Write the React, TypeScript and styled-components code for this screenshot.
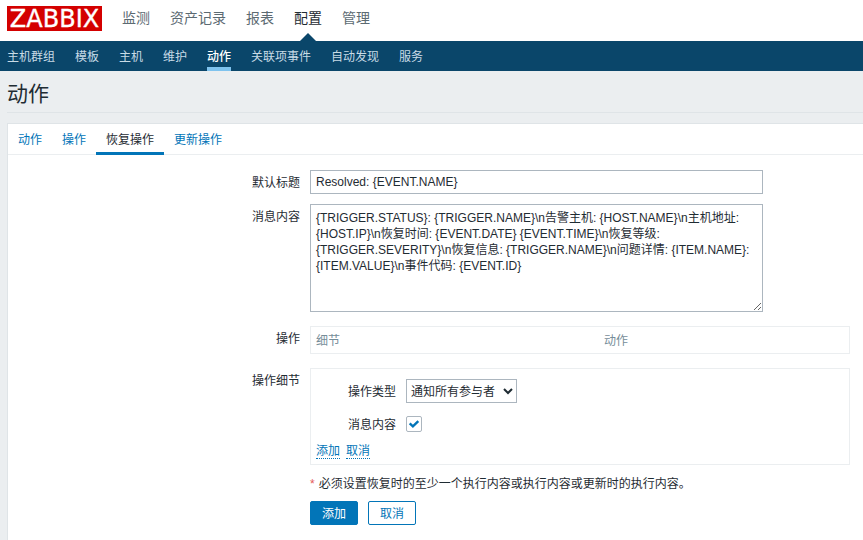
import React from 'react';
import styled, { createGlobalStyle, css } from 'styled-components';

const fontStack = '"Liberation Sans", "Noto Sans CJK SC", sans-serif';

const GlobalStyle = createGlobalStyle`
  *, *::before, *::after { box-sizing: border-box; }
  html, body { margin: 0; height: 540px; overflow: hidden; }
  body { background: #ebeef0; color: #1f2c33; font: 12px/16px ${fontStack}; }
`;

const Page = styled.div`
  height: 540px;
  display: flex;
  flex-direction: column;
  overflow: hidden;
`;

const TopBar = styled.header`
  flex: none;
  height: 41px;
  display: flex;
  align-items: stretch;
  padding-left: 7px;
  background: #fff;
`;

const Logo = styled.div`
  width: 95px;
  height: 25px;
  margin: 6px 20px 0 0;
  background: #d40000;
  color: #fff;
  font: 24px/26px "DejaVu Sans", sans-serif;
  -webkit-text-stroke: 0.35px #fff;
  text-align: center;
  white-space: nowrap;
`;

const TopLink = styled.a<{ $active?: boolean }>`
  position: relative;
  margin-right: 20px;
  padding-top: 8px;
  font-size: 14px;
  line-height: 20px;
  color: ${(p) => (p.$active ? '#1f2c33' : '#5c6a72')};
  ${(p) =>
    p.$active &&
    css`
      &::after {
        content: '';
        position: absolute;
        left: 50%;
        bottom: 0;
        margin-left: -8px;
        border: 8px solid transparent;
        border-top: 0;
        border-bottom-color: #0a466a;
      }
    `}
`;

const SubNav = styled.nav`
  flex: none;
  height: 30px;
  display: flex;
  gap: 20px;
  padding-left: 7px;
  background: #0a466a;
`;

const SubLink = styled.a<{ $active?: boolean }>`
  height: 30px;
  padding-top: 8px;
  color: ${(p) => (p.$active ? '#fff' : '#c8dbe6')};
  font-weight: ${(p) => (p.$active ? 500 : 400)};
  border-bottom: 4px solid ${(p) => (p.$active ? '#7fc3ee' : 'transparent')};
`;

const Title = styled.h1`
  flex: none;
  height: 42px;
  margin: 0 0 10px 7px;
  padding-top: 11px;
  border-bottom: 1px solid #dfe4e7;
  font-size: 21px;
  line-height: 24px;
  font-weight: 400;
`;

const Panel = styled.main`
  flex: 1;
  margin-left: 7px;
  background: #fff;
  border: 1px solid #dfe4e7;
  border-width: 1px 0 0 1px;
`;

const Tabs = styled.div`
  display: flex;
  height: 31px;
  border-bottom: 1px solid #ebeef0;
`;

const Tab = styled.a<{ $active?: boolean }>`
  height: 31px;
  padding: 8px 10px 0;
  color: ${(p) => (p.$active ? '#1f2c33' : '#0275b8')};
  border-bottom: 3px solid ${(p) => (p.$active ? '#0275b8' : 'transparent')};
`;

const Form = styled.form`
  padding-top: 15px;
`;

const Row = styled.div<{ $gap?: number }>`
  display: grid;
  grid-template-columns: 292px 1fr;
  column-gap: 10px;
  margin-bottom: ${(p) => p.$gap ?? 14}px;
`;

const Label = styled.label<{ $top?: number }>`
  padding-top: ${(p) => p.$top ?? 5}px;
  text-align: right;
`;

const TextInput = styled.input`
  width: 453px;
  height: 24px;
  padding: 0 5px;
  border: 1px solid #acb6bf;
  border-radius: 0;
  color: #1f2c33;
  font: 12px/16px ${fontStack};
`;

const MessageArea = styled.textarea`
  display: block;
  width: 453px;
  height: 108px;
  margin: 0;
  padding: 5px;
  border: 1px solid #acb6bf;
  color: #1f2c33;
  font: 12px/16px ${fontStack};
`;

const Box = styled.div`
  width: 540px;
  border: 1px solid #ebeef0;
`;

const TableHead = styled(Box)`
  display: grid;
  grid-template-columns: 288px 1fr;
  height: 28px;
  padding: 6px 5px 4px;
  color: #768d99;
`;

const Details = styled(Box)`
  height: 97px;
  padding: 10px 5px 0;
`;

const DetailRow = styled.div<{ $height: number }>`
  display: grid;
  grid-template-columns: 80px 1fr;
  column-gap: 10px;
  align-items: center;
  height: ${(p) => p.$height}px;
`;

const Select = styled.select`
  width: 111px;
  height: 24px;
  padding: 1px 0 0;
  border: 1px solid #acb6bf;
  border-radius: 0;
  background: #fff;
  color: #1f2c33;
  font: 12px/16px ${fontStack};
`;

const CheckBox = styled.span`
  display: flex;
  width: 16px;
  height: 16px;
  border: 1px solid #acb6bf;
  border-radius: 2px;
`;

const LinkRow = styled.div`
  display: flex;
  gap: 6px;
  margin-top: -1px;
`;

const DottedLink = styled.a`
  height: 15px;
  line-height: 15px;
  color: #0275b8;
  border-bottom: 1px dotted #0275b8;
`;

const Note = styled.p`
  margin: -3px 0 9px 302px;
`;

const Asterisk = styled.span`
  margin-right: 4px;
  color: #e45959;
`;

const Actions = styled.div`
  display: flex;
  gap: 10px;
  margin-left: 302px;
`;

const Button = styled.button<{ $primary?: boolean }>`
  width: 48px;
  height: 24px;
  padding: 2px 0 0;
  border: 1px solid #0275b8;
  border-radius: 2px;
  background: ${(p) => (p.$primary ? '#0275b8' : '#fff')};
  color: ${(p) => (p.$primary ? '#fff' : '#0275b8')};
  font: 12px/20px ${fontStack};
`;

const topItems = ['监测', '资产记录', '报表', '配置', '管理'];
const subItems = ['主机群组', '模板', '主机', '维护', '动作', '关联项事件', '自动发现', '服务'];
const tabItems = ['动作', '操作', '恢复操作', '更新操作'];
const message =
  '{TRIGGER.STATUS}: {TRIGGER.NAME}\\n告警主机: {HOST.NAME}\\n主机地址: {HOST.IP}\\n恢复时间: {EVENT.DATE} {EVENT.TIME}\\n恢复等级: {TRIGGER.SEVERITY}\\n恢复信息: {TRIGGER.NAME}\\n问题详情: {ITEM.NAME}: {ITEM.VALUE}\\n事件代码: {EVENT.ID}';

export default function App() {
  return (
    <Page>
      <GlobalStyle />
      <TopBar>
        <Logo>ZABBIX</Logo>
        {topItems.map((t) => (
          <TopLink key={t} $active={t === '配置'}>{t}</TopLink>
        ))}
      </TopBar>
      <SubNav>
        {subItems.map((t) => (
          <SubLink key={t} $active={t === '动作'}>{t}</SubLink>
        ))}
      </SubNav>
      <Title>动作</Title>
      <Panel>
        <Tabs>
          {tabItems.map((t) => (
            <Tab key={t} $active={t === '恢复操作'}>{t}</Tab>
          ))}
        </Tabs>
        <Form>
          <Row $gap={10}>
            <Label>默认标题</Label>
            <TextInput defaultValue="Resolved: {EVENT.NAME}" />
          </Row>
          <Row>
            <Label>消息内容</Label>
            <MessageArea defaultValue={message} spellCheck={false} />
          </Row>
          <Row>
            <Label>操作</Label>
            <TableHead>
              <span>细节</span>
              <span>动作</span>
            </TableHead>
          </Row>
          <Row>
            <Label>操作细节</Label>
            <Details>
              <DetailRow $height={24}>
                <Label $top={2}>操作类型</Label>
                <Select defaultValue="all">
                  <option value="all">通知所有参与者</option>
                </Select>
              </DetailRow>
              <DetailRow $height={42}>
                <Label $top={2}>消息内容</Label>
                <CheckBox>
                  <svg width="14" height="14" viewBox="0 0 14 14" fill="none" stroke="#0275b8" strokeWidth="2.4">
                    <path d="M2.7 6.3 L5.9 9.3 L11.3 4.1" />
                  </svg>
                </CheckBox>
              </DetailRow>
              <LinkRow>
                <DottedLink>添加</DottedLink>
                <DottedLink>取消</DottedLink>
              </LinkRow>
            </Details>
          </Row>
          <Note>
            <Asterisk>*</Asterisk>必须设置恢复时的至少一个执行内容或执行内容或更新时的执行内容。
          </Note>
          <Actions>
            <Button type="button" $primary>添加</Button>
            <Button type="button">取消</Button>
          </Actions>
        </Form>
      </Panel>
    </Page>
  );
}
